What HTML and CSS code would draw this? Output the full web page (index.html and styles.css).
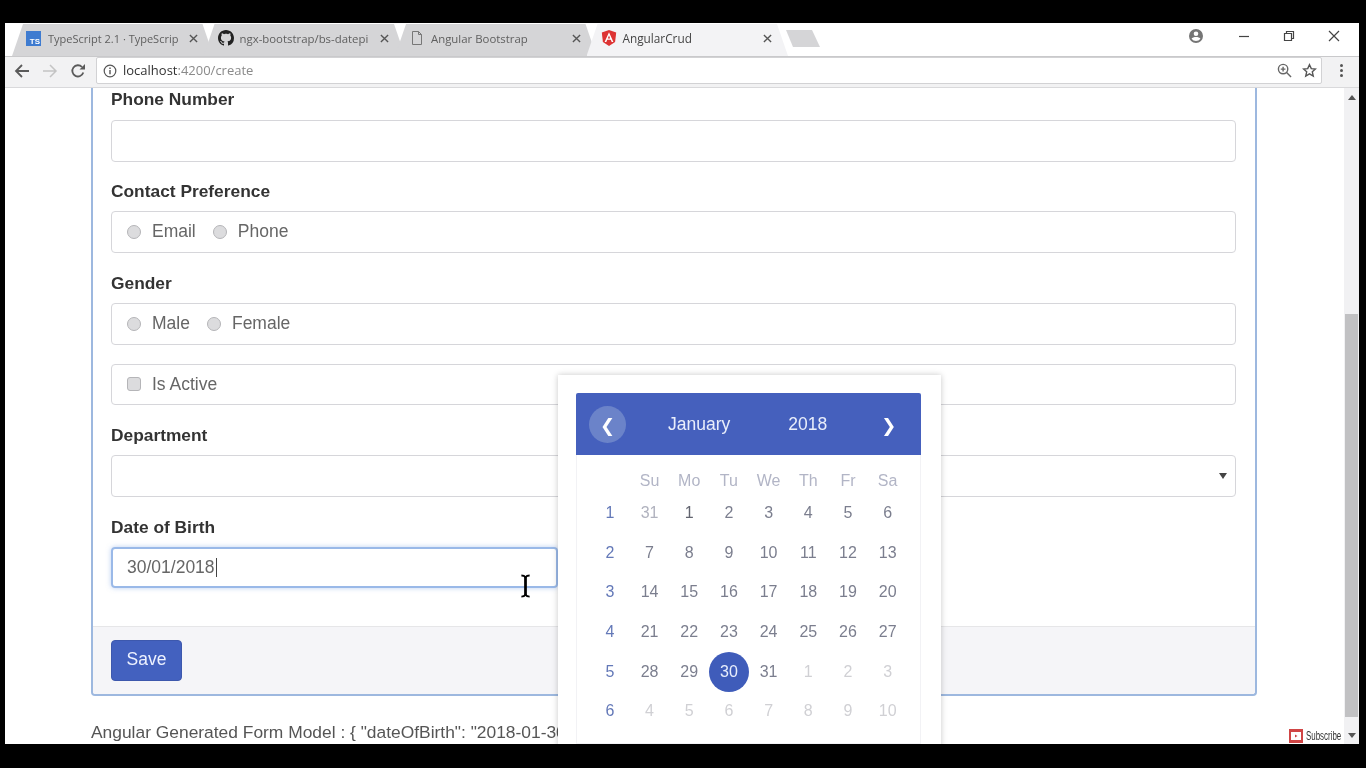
FILE: index.html
```html
<!DOCTYPE html>
<html>
  <head>
    <title>AngularCrud</title>
    <link rel="stylesheet" href="styles.css">
  </head>
  <body>
    <div class="window">
      <div class="tabstrip">
        <div class="tab tab-first">
          <span class="ts-icon">TS</span>
          <span class="tab-title">TypeScript 2.1 · TypeScrip</span>
          <svg class="tab-close" viewBox="0 0 10 10"><path d="M1 1l8 8M9 1l-8 8"/></svg>
        </div>
        <div class="tab">
          <svg class="favicon" viewBox="0 0 16 16"><path fill="#222" d="M8 0C3.58 0 0 3.58 0 8c0 3.54 2.29 6.53 5.47 7.59.4.07.55-.17.55-.38 0-.19-.01-.82-.01-1.49-2.01.37-2.53-.49-2.69-.94-.09-.23-.48-.94-.82-1.13-.28-.15-.68-.52-.01-.53.63-.01 1.08.58 1.23.82.72 1.21 1.87.87 2.33.66.07-.52.28-.87.51-1.07-1.78-.2-3.64-.89-3.64-3.95 0-.87.31-1.59.82-2.15-.08-.2-.36-1.02.08-2.12 0 0 .67-.21 2.2.82.64-.18 1.32-.27 2-.27s1.36.09 2 .27c1.53-1.04 2.2-.82 2.2-.82.44 1.1.16 1.92.08 2.12.51.56.82 1.27.82 2.15 0 3.07-1.87 3.75-3.65 3.95.29.25.54.73.54 1.48 0 1.07-.01 1.93-.01 2.2 0 .21.15.46.55.38A8.01 8.01 0 0 0 16 8c0-4.42-3.58-8-8-8z"/></svg>
          <span class="tab-title">ngx-bootstrap/bs-datepi</span>
          <svg class="tab-close" viewBox="0 0 10 10"><path d="M1 1l8 8M9 1l-8 8"/></svg>
        </div>
        <div class="tab">
          <svg class="favicon" viewBox="0 0 16 16"><path fill="none" stroke="#777" d="M3.5 1.5h6l3 3v10h-9zM9.5 1.5v3h3"/></svg>
          <span class="tab-title">Angular Bootstrap</span>
          <svg class="tab-close" viewBox="0 0 10 10"><path d="M1 1l8 8M9 1l-8 8"/></svg>
        </div>
        <div class="tab tab-active">
          <svg class="favicon" viewBox="0 0 16 16"><path fill="#dd3333" d="M8 0L.8 2.6l1.1 9.5L8 16l6.1-3.9 1.1-9.5z"/><path fill="#fff" d="M8 2.2L3.6 12h1.7l.9-2.2h3.6l.9 2.2h1.7zm-1.2 6.2L8 5.6l1.2 2.8z"/></svg>
          <span class="tab-title">AngularCrud</span>
          <svg class="tab-close" viewBox="0 0 10 10"><path d="M1 1l8 8M9 1l-8 8"/></svg>
        </div>
        <div class="newtab"></div>
        <div class="caption">
          <svg class="cap-account" viewBox="0 0 16 16"><path fill="#757575" d="M8 1a7 7 0 1 0 0 14A7 7 0 0 0 8 1zm0 2.4a2.3 2.3 0 1 1 0 4.6 2.3 2.3 0 0 1 0-4.6zM8 13a5.4 5.4 0 0 1-4.4-2.3C3.7 9.500 6.500 9 8 9s4.300.5 4.400 1.700A5.400 5.400 0 0 1 8 13z"/></svg>
          <svg class="cap-btn" viewBox="0 0 12 12"><path d="M1 6.500h10"/></svg>
          <svg class="cap-btn" viewBox="0 0 12 12"><path d="M1.500 3.500h7v7h-7zM3.500 3.500v-2h7v7h-2"/></svg>
          <svg class="cap-btn" viewBox="0 0 12 12"><path d="M1 1l10 10M11 1L1 11"/></svg>
        </div>
      </div>

      <div class="toolbar">
        <svg class="nav-icon" viewBox="0 0 16 16"><path fill="none" stroke="#5a5a5a" stroke-width="1.800" d="M15 8H2M8 2L2 8l6 6"/></svg>
        <svg class="nav-icon" viewBox="0 0 16 16"><path fill="none" stroke="#c4c4c4" stroke-width="1.500" d="M1 8h13M8 2l6 6-6 6"/></svg>
        <svg class="nav-icon" viewBox="0 0 16 16"><path fill="none" stroke="#5a5a5a" stroke-width="1.800" d="M13.300 9.500A5.600 5.600 0 1 1 12 4"/><path fill="#5a5a5a" d="M9.500 6.500H15V1z"/></svg>
        <div class="omnibox">
          <svg class="info-icon" viewBox="0 0 14 14"><circle cx="7" cy="7" r="5.800" fill="none" stroke="#555" stroke-width="1.200"/><path stroke="#555" stroke-width="1.400" d="M7 6v4.200M7 3.500v1.400"/></svg>
          <span class="url"><span class="url-host">localhost</span>:4200/create</span>
          <svg class="zoom-icon" viewBox="0 0 16 16"><g fill="none" stroke="#666" stroke-width="1.500"><circle cx="6.500" cy="6.500" r="5"/><path d="M10.200 10.200L15 15M6.500 4v5M4 6.500h5"/></g></svg>
          <svg class="star-icon" viewBox="0 0 16 16"><path fill="none" stroke="#555" stroke-width="1.500" d="M8 1.800l1.900 4.200 4.500.4-3.400 3 1 4.500L8 11.600l-4 2.300 1-4.500-3.400-3 4.500-.4z"/></svg>
        </div>
        <div class="menu-dots"><i></i><i></i><i></i></div>
      </div>

      <div class="viewport">
        <main class="page">
          <form class="card">
            <div class="card-body">
              <div class="group group-phone">
                <label class="field-label">Phone Number</label>
                <div class="control"></div>
              </div>
              <div class="group group-contact">
                <label class="field-label">Contact Preference</label>
                <div class="control">
                  <span class="opt opt-email"><i class="radio"></i>Email</span>
                  <span class="opt"><i class="radio"></i>Phone</span>
                </div>
              </div>
              <div class="group">
                <label class="field-label">Gender</label>
                <div class="control">
                  <span class="opt opt-male"><i class="radio"></i>Male</span>
                  <span class="opt"><i class="radio"></i>Female</span>
                </div>
              </div>
              <div class="group">
                <div class="control">
                  <span class="opt"><i class="check"></i>Is Active</span>
                </div>
              </div>
              <div class="group">
                <label class="field-label">Department</label>
                <div class="control control-select"><i class="select-arrow"></i></div>
              </div>
              <div class="group group-last">
                <label class="field-label">Date of Birth</label>
                <div class="control control-focus">30/01/2018<i class="caret"></i></div>
              </div>
            </div>
            <div class="card-footer">
              <button class="btn-save" type="button">Save</button>
            </div>
          </form>
          <p class="model">Angular Generated Form Model : { "dateOfBirth": "2018-01-30T00:00:00.000Z" }</p>
        </main>

        <div class="scrollbar">
          <i class="arrow-up"></i>
          <div class="track"><div class="thumb"></div></div>
          <i class="arrow-down"></i>
        </div>

        <div class="datepicker">
          <div class="dp-head">
            <span class="dp-nav dp-nav-hover">❮</span>
            <span class="dp-month">January</span>
            <span class="dp-year">2018</span>
            <span class="dp-nav dp-nav-next">❯</span>
          </div>
          <div class="dp-body">
            <span></span><b>Su</b><b>Mo</b><b>Tu</b><b>We</b><b>Th</b><b>Fr</b><b>Sa</b>
            <em>1</em><span class="prev">31</span><span class="dark">1</span><span>2</span><span>3</span><span>4</span><span>5</span><span>6</span>
            <em>2</em><span>7</span><span>8</span><span>9</span><span>10</span><span>11</span><span>12</span><span>13</span>
            <em>3</em><span>14</span><span>15</span><span>16</span><span>17</span><span>18</span><span>19</span><span>20</span>
            <em>4</em><span>21</span><span>22</span><span>23</span><span>24</span><span>25</span><span>26</span><span>27</span>
            <em>5</em><span>28</span><span>29</span><span class="selected">30</span><span>31</span><span class="next">1</span><span class="next">2</span><span class="next">3</span>
            <em>6</em><span class="next">4</span><span class="next">5</span><span class="next">6</span><span class="next">7</span><span class="next">8</span><span class="next">9</span><span class="next">10</span>
          </div>
        </div>

        <svg class="ibeam" viewBox="0 0 12 26"><path fill="none" stroke="#000" stroke-width="2" d="M1.500 1.500c2 0 3.500.5 4.500 2 1-1.500 2.500-2 4.500-2M1.500 24.500c2 0 3.500-.5 4.500-2 1 1.500 2.500 2 4.500 2"/><path stroke="#000" stroke-width="3" d="M6 3v20"/></svg>

        <div class="subscribe">
          <svg class="yt" viewBox="0 0 14 14"><rect width="14" height="14" fill="#d04545"/><rect x="2" y="3" width="10" height="8" fill="#fff"/><path fill="#d04545" d="M6 5.500l2.500 1.500L6 8.500z"/></svg>
          <span class="subscribe-text">Subscribe</span>
        </div>
      </div>
    </div>
  </body>
</html>
```

FILE: styles.css
```css
* {
  box-sizing: border-box;
}
html, body {
  height: 100%;
}
body {
  display: flex;
  margin: 0;
  padding: 23px 7px 24px 5px;
  background: #000;
  font-family: "Liberation Sans", Arial, sans-serif;
  overflow: hidden;
}
.window {
  display: flex;
  flex-direction: column;
  flex-grow: 1;
  background: #fff;
  filter: blur(0.35px);
}

/* tab strip */
.tabstrip {
  display: flex;
  flex-shrink: 0;
  height: 34px;
  padding: 1px 0 0 7px;
  background: #fff;
  border-bottom: 1px solid #c9c9cb;
}
.tab {
  display: flex;
  align-items: center;
  width: 201.500px;
  height: 32px;
  margin-right: -10px;
  padding: 0 16px 4px 14px;
  background: #d5d5d7;
  clip-path: polygon(11px 0, calc(100% - 11px) 0, 100% 100%, 0 100%);
  color: #5f5f5f;
  font-family: "Open Sans", "Liberation Sans", sans-serif;
  font-size: 11.400px;
}
.tab-first {
  font-size: 11px;
}
.tab-first .tab-title {
  margin-left: 7px;
}
.tab-active {
  background: #f3f3f5;
  color: #444;
  font-size: 11.800px;
}
.ts-icon {
  flex-shrink: 0;
  display: flex;
  align-items: flex-end;
  justify-content: flex-end;
  width: 15px;
  height: 15px;
  padding-right: 1px;
  background: #3e7bd0;
  color: #fff;
  font-family: "Liberation Sans", sans-serif;
  font-size: 8px;
  font-weight: bold;
  line-height: 9px;
}
.favicon {
  flex-shrink: 0;
  width: 16px;
  height: 16px;
}
.tab-title {
  flex-grow: 1;
  min-width: 0;
  margin-left: 6px;
  white-space: nowrap;
}
.tab-close {
  flex-shrink: 0;
  width: 9px;
  height: 9px;
  margin-left: 4px;
  fill: none;
  stroke: #555;
  stroke-width: 1.500;
}
.newtab {
  flex-shrink: 0;
  width: 34px;
  height: 17px;
  margin: 6px 0 0 8px;
  background: #d5d5d7;
  clip-path: polygon(0 0, 26px 0, 100% 100%, 7px 100%);
}
.caption {
  display: flex;
  align-items: flex-start;
  margin-left: auto;
  padding: 4px 19px 0 0;
}
.cap-account {
  width: 16px;
  height: 16px;
  margin-right: 34px;
}
.cap-btn {
  width: 12px;
  height: 12px;
  margin: 2px 0 0 33px;
  fill: none;
  stroke: #444;
  stroke-width: 1.200;
}
.cap-account + .cap-btn {
  margin-left: 0;
}

/* toolbar */
.toolbar {
  display: flex;
  align-items: center;
  flex-shrink: 0;
  height: 31px;
  padding: 0 0 3px 9px;
  background: #f2f2f3;
  border-bottom: 1px solid #d9d9db;
}
.nav-icon {
  flex-shrink: 0;
  width: 16px;
  height: 16px;
  margin-right: 12px;
}
.omnibox {
  display: flex;
  align-items: center;
  flex-shrink: 0;
  width: 1226px;
  height: 27px;
  margin-left: -2px;
  padding: 0 4px 0 6px;
  background: #fff;
  border: 1px solid #d2d2d4;
  border-radius: 2px;
}
.info-icon {
  width: 14px;
  height: 14px;
  margin-right: 6px;
}
.url {
  flex-grow: 1;
  padding-bottom: 2px;
  color: #8a8a8a;
  font-family: "Open Sans", "Liberation Sans", sans-serif;
  font-size: 13px;
}
.url-host {
  color: #333;
}
.zoom-icon {
  width: 15px;
  height: 15px;
  margin-right: 10px;
}
.star-icon {
  width: 15px;
  height: 15px;
}
.menu-dots {
  display: flex;
  flex-direction: column;
  gap: 2px;
  margin-left: 18px;
}
.menu-dots i {
  width: 3px;
  height: 3px;
  border-radius: 50%;
  background: #555;
}

/* page */
.viewport {
  position: relative;
  display: flex;
  flex-grow: 1;
  min-height: 0;
  overflow: hidden;
}
.page {
  flex-grow: 1;
  min-width: 0;
  padding-left: 86px;
  overflow: hidden;
}
.card {
  width: 1166px;
  border: 2px solid #9db8df;
  border-top: 0;
  border-radius: 0 0 4px 4px;
}
.card-body {
  padding: 0 19px 0 18px;
}
.group {
  margin-bottom: 19px;
}
.group-phone {
  margin-bottom: 18.500px;
}
.group-phone .field-label {
  margin-bottom: 9px;
}
.group-contact {
  margin-bottom: 19.500px;
}
.group-last {
  margin-bottom: 38px;
}
.field-label {
  display: block;
  height: 23px;
  margin-bottom: 8px;
  color: #333;
  font-size: 17.350px;
  font-weight: bold;
  line-height: 23px;
}
.control {
  display: flex;
  align-items: center;
  height: 41.500px;
  padding: 0 15px;
  border: 1px solid #d6d6da;
  border-radius: 4px;
  color: #666;
  font-size: 17.500px;
}
.control-focus {
  width: 447px;
  border: 2px solid #9ab9e8;
  padding: 0 14px;
  box-shadow: 0 0 5px rgba(120, 160, 230, 0.5);
}
.control-select {
  justify-content: flex-end;
  padding-right: 8px;
}
.select-arrow {
  width: 0;
  height: 0;
  border: 4px solid transparent;
  border-top: 6px solid #444;
  border-bottom: 0;
}
.caret {
  width: 1px;
  height: 19px;
  margin-left: 1px;
  background: #444;
}
.opt {
  display: flex;
  align-items: center;
}
.opt-email {
  margin-right: 17px;
}
.opt-male {
  margin-right: 17px;
}
.radio, .check {
  flex-shrink: 0;
  width: 14px;
  height: 14px;
  margin-right: 11px;
  border: 1px solid #b5b5b8;
  border-radius: 50%;
  background: #dcdcde;
}
.check {
  border-radius: 3px;
}
.card-footer {
  height: 68px;
  padding: 13px 18px;
  background: #f5f5f8;
  border-top: 1px solid #e6e6e8;
  border-radius: 0 0 3px 3px;
}
.btn-save {
  width: 71px;
  height: 41px;
  padding: 0 0 3px;
  background: #4361bf;
  border: 1px solid #3d58ad;
  border-radius: 4px;
  color: #eef2ff;
  font-family: inherit;
  font-size: 17.500px;
}
.model {
  margin: 26px 0 0;
  color: #555;
  font-size: 17.400px;
  white-space: nowrap;
}

/* scrollbar */
.scrollbar {
  display: flex;
  flex-direction: column;
  align-items: center;
  flex-shrink: 0;
  width: 15px;
  background: #f1f1f3;
}
.arrow-up, .arrow-down {
  flex-shrink: 0;
  width: 0;
  height: 0;
  border: 4px solid transparent;
}
.arrow-up {
  margin: 7px 0 6px;
  border-top: 0;
  border-bottom: 5px solid #555;
}
.arrow-down {
  margin: 6px 0 6px;
  border-bottom: 0;
  border-top: 5px solid #555;
}
.track {
  flex-grow: 1;
  width: 100%;
  padding: 208px 1px 0;
}
.thumb {
  height: 403px;
  background: #c1c1c3;
}

/* datepicker popover */
.datepicker {
  position: absolute;
  left: 553px;
  top: 287px;
  width: 383px;
  height: 385px;
  padding: 18px 20px 0 18px;
  background: #fff;
  box-shadow: 0 0 6px rgba(0, 0, 0, 0.22);
}
.dp-head {
  display: flex;
  align-items: center;
  height: 62px;
  padding: 0 0 0 13px;
  background: #4560bd;
  border-radius: 2px 2px 0 0;
  color: #e9eefb;
  font-size: 17.500px;
}
.dp-nav {
  display: flex;
  align-items: center;
  justify-content: center;
  width: 37px;
  height: 37px;
  padding-top: 3px;
  border-radius: 50%;
  color: #fff;
  font-family: "DejaVu Sans", sans-serif;
  font-size: 18px;
}
.dp-nav-hover {
  background: #6b83c9;
}
.dp-nav-next {
  margin-left: 43px;
}
.dp-month {
  margin-left: 42px;
}
.dp-year {
  margin-left: 58px;
}
.dp-body {
  display: grid;
  grid-template-columns: repeat(8, 39.700px);
  grid-template-rows: 24px repeat(6, 39.700px);
  align-items: center;
  justify-items: center;
  height: 289px;
  padding: 14px 13px 0 13px;
  border: 1px solid #f2f2f5;
  border-top: 0;
  color: #7b7e8e;
  font-size: 16px;
}
.dp-body b {
  color: #b2b5c6;
  font-weight: normal;
}
.dp-body em {
  color: #6479b8;
  font-style: normal;
}
.dp-body .dark {
  color: #62646f;
}
.dp-body .prev {
  color: #b0b2be;
}
.dp-body .next {
  color: #d0d0d4;
}
.dp-body .selected {
  display: flex;
  align-items: center;
  justify-content: center;
  width: 40px;
  height: 40px;
  border-radius: 50%;
  background: #3f5cba;
  color: #e8eefc;
}

.ibeam {
  position: absolute;
  left: 515px;
  top: 485px;
  width: 11px;
  height: 26px;
}
.subscribe {
  position: absolute;
  right: 18px;
  bottom: 1px;
  display: flex;
  align-items: center;
  gap: 3px;
  height: 14px;
  background: #fff;
  color: #333;
}
.subscribe-text {
  width: 35px;
  font-size: 12px;
  white-space: nowrap;
  transform: scaleX(0.660);
  transform-origin: left;
}
.yt {
  width: 14px;
  height: 14px;
}
```
